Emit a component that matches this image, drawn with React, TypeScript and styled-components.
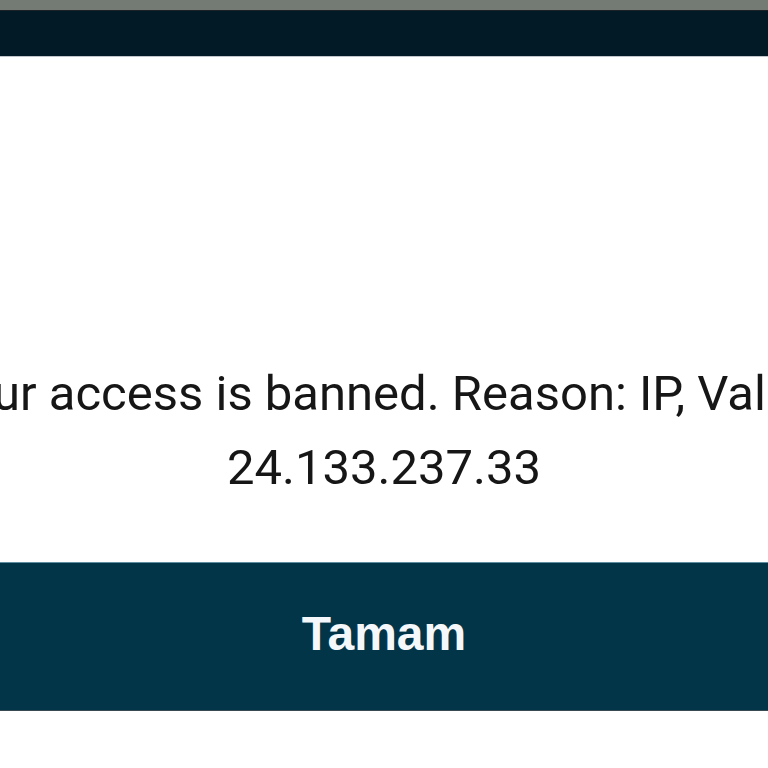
import React from "react";
import styled, { createGlobalStyle } from "styled-components";

const GlobalStyle = createGlobalStyle`
    html, body {
        margin: 0;
        padding: 0;
        background: #ffffff;
        overflow: hidden;
    }
`;

const Screen = styled.div`
    display: flex;
    flex-direction: column;
    width: 768px;
    height: 768px;
    overflow: hidden;
    background: #ffffff;
`;

const StatusBar = styled.div`
    height: 10px;
    background: #747b74;
    border-bottom: 1px solid #1a2128;
`;

const TopBar = styled.div`
    height: 45px;
    background: #021a26;
    border-bottom: 1px solid #c2c6cb;
`;

const Body = styled.div`
    display: flex;
    flex-direction: column;
    align-items: center;
    height: 505px;
    padding-top: 300px;
    box-sizing: border-box;
    overflow: hidden;
`;

const MessageLine = styled.div`
    flex-shrink: 0;
    white-space: nowrap;
    font-family: Roboto, "Noto Sans", sans-serif;
    font-size: 49px;
    line-height: 74px;
    color: #161616;
`;

const OkButton = styled.button`
    display: flex;
    align-items: center;
    justify-content: center;
    height: 149px;
    width: 100%;
    margin: 0;
    padding: 0 0 6px;
    border: none;
    border-top: 1px solid #5f8ea0;
    border-bottom: 1px solid #3a4a52;
    background: #033549;
    color: #f4f8fa;
    font-family: "Liberation Sans", Arial, sans-serif;
    font-weight: 700;
    font-size: 48px;
`;

export default function App() {
    return (
        <Screen>
            <GlobalStyle />
            <StatusBar />
            <TopBar />
            <Body>
                <MessageLine>Your access is banned. Reason: IP, Value:</MessageLine>
                <MessageLine>24.133.237.33</MessageLine>
            </Body>
            <OkButton>Tamam</OkButton>
        </Screen>
    );
}
